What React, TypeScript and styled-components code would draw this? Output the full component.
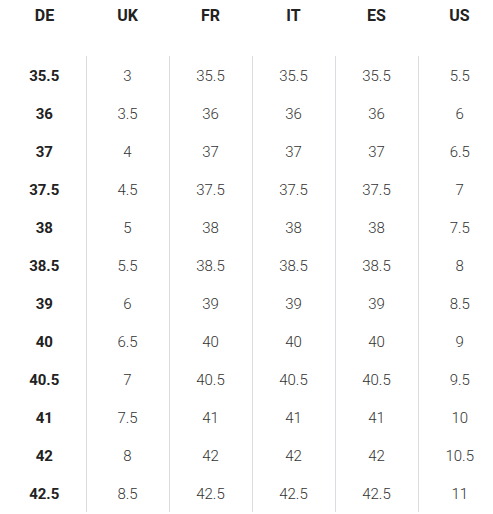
import React from "react";
import styled, { createGlobalStyle } from "styled-components";

const GlobalStyle = createGlobalStyle`
  html, body {
    margin: 0;
    padding: 0;
    background: #ffffff;
    overflow: hidden;
  }
  body {
    font-family: Roboto, "Liberation Sans", sans-serif;
    color: #222;
  }
`;

const headers = ["DE", "UK", "FR", "IT", "ES", "US"];

const rows: string[][] = [
  ["35.5", "3", "35.5", "35.5", "35.5", "5.5"],
  ["36", "3.5", "36", "36", "36", "6"],
  ["37", "4", "37", "37", "37", "6.5"],
  ["37.5", "4.5", "37.5", "37.5", "37.5", "7"],
  ["38", "5", "38", "38", "38", "7.5"],
  ["38.5", "5.5", "38.5", "38.5", "38.5", "8"],
  ["39", "6", "39", "39", "39", "8.5"],
  ["40", "6.5", "40", "40", "40", "9"],
  ["40.5", "7", "40.5", "40.5", "40.5", "9.5"],
  ["41", "7.5", "41", "41", "41", "10"],
  ["42", "8", "42", "42", "42", "10.5"],
  ["42.5", "8.5", "42.5", "42.5", "42.5", "11"],
];

const Wrapper = styled.div`
  padding-left: 3px;
  width: 498px;
`;

const Table = styled.table`
  border-collapse: collapse;
  table-layout: fixed;
  width: 498px;
`;

const HeadCell = styled.th`
  width: 83px;
  height: 52px;
  padding: 4px 0 0;
  vertical-align: top;
  text-align: center;
  font-size: 16px;
  font-weight: 700;
  line-height: 24px;
  color: #222;
`;

const Cell = styled.td<{ $key?: boolean }>`
  height: 35px;
  padding: 3px 0 0;
  text-align: center;
  vertical-align: top;
  font-size: 15px;
  line-height: 35px;
  font-weight: ${(p) => (p.$key ? 700 : 300)};
  color: ${(p) => (p.$key ? "#222" : "#333")};
  border-left: ${(p) => (p.$key ? "none" : "1px solid #dcdce0")};
`;

export default function App() {
  return (
    <Wrapper>
      <GlobalStyle />
      <Table>
        <thead>
          <tr>
            {headers.map((h) => (
              <HeadCell key={h}>{h}</HeadCell>
            ))}
          </tr>
        </thead>
        <tbody>
          {rows.map((r, i) => (
            <tr key={i}>
              {r.map((v, j) => (
                <Cell key={j} $key={j === 0}>
                  {v}
                </Cell>
              ))}
            </tr>
          ))}
        </tbody>
      </Table>
    </Wrapper>
  );
}
